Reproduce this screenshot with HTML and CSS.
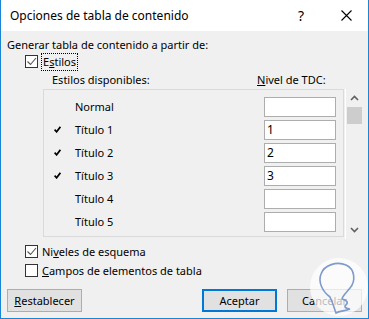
FILE: index.html
```html
<!DOCTYPE html>
<html lang="es">
<head>
  <meta charset="UTF-8">
  <meta name="viewport" content="width=device-width, initial-scale=1.0">
  <title>Opciones de tabla de contenido</title>
  <link rel="stylesheet" href="styles.css">
</head>
<body>
  <div class="window">
    <div class="titlebar">
      <span class="title">Opciones de tabla de contenido</span>
      <span class="help">?</span>
      <svg class="close" width="11" height="11" viewBox="0 0 11 11">
        <path d="M0.5 0.5 L10.5 10.5 M10.5 0.5 L0.5 10.5" stroke="#000" stroke-width="1.1" fill="none"/>
      </svg>
    </div>

    <div class="content">
      <p class="intro">Generar tabla de contenido a partir de:</p>

      <div class="check">
        <span class="box">
          <svg width="11" height="11" viewBox="0 0 11 11"><path d="M1.5 5.5 L4.5 8.5 L10 2" stroke="#555" stroke-width="1.1" fill="none"/></svg>
        </span>
        <span class="focus">E<u>s</u>tilos</span>
      </div>

      <div class="styles">
        <div class="styles-head">
          <span>Estilos disponibles:</span>
          <span class="level-head"><u>N</u>ivel de TDC:</span>
        </div>
        <div class="list-wrap">
          <div class="list">
            <div class="row"><span class="mark"></span><span>Normal</span><span class="level"></span></div>
            <div class="row"><span class="mark on"></span><span>Título 1</span><span class="level">1</span></div>
            <div class="row"><span class="mark on"></span><span>Título 2</span><span class="level">2</span></div>
            <div class="row"><span class="mark on"></span><span>Título 3</span><span class="level">3</span></div>
            <div class="row"><span class="mark"></span><span>Título 4</span><span class="level"></span></div>
            <div class="row"><span class="mark"></span><span>Título 5</span><span class="level"></span></div>
          </div>
          <div class="scrollbar">
            <svg class="arrow" width="9" height="6" viewBox="0 0 9 6"><path d="M1 5 L4.5 1.5 L8 5" stroke="#606060" stroke-width="1.6" fill="none"/></svg>
            <div class="thumb"></div>
            <div class="track"></div>
            <svg class="arrow" width="9" height="6" viewBox="0 0 9 6"><path d="M1 1 L4.5 4.5 L8 1" stroke="#606060" stroke-width="1.6" fill="none"/></svg>
          </div>
        </div>
      </div>

      <div class="check check-first">
        <span class="box">
          <svg width="11" height="11" viewBox="0 0 11 11"><path d="M1.5 5.5 L4.5 8.5 L10 2" stroke="#555" stroke-width="1.1" fill="none"/></svg>
        </span>
        <span class="label">Ni<u>v</u>eles de esquema</span>
      </div>
      <div class="check">
        <span class="box"></span>
        <span class="label"><u>C</u>ampos de elementos de tabla</span>
      </div>

      <div class="buttons">
        <button class="btn"><u>R</u>establecer</button>
        <span class="spacer"></span>
        <button class="btn btn-default">Aceptar</button>
        <button class="btn">Cancelar</button>
      </div>
    </div>

    <svg class="watermark" width="62" height="62" viewBox="0 0 62 62">
      <circle cx="30" cy="31" r="29" fill="rgba(255,255,255,0.72)"/>
      <path d="M21 41 C13 35 9 26 12 18 C15 9 28 5 37 9 C46 13 47 25 41 32 C38 36 34 39 33 43 C37 44 40 46 37 49 C34 51 38 53 41 53 C36 55 30 55 27 57 C25 52 24 47 21 41 Z" stroke="#7d9bcb" stroke-width="1.6" fill="none"/>
    </svg>
  </div>
</body>
</html>
```

FILE: styles.css
```css
body {
  margin: 0;
  font-family: "Noto Sans", "Open Sans", sans-serif;
  font-size: 11px;
  color: #000;
  background: #fff;
}
.window {
  position: relative;
  width: 369px;
  height: 319px;
  box-sizing: border-box;
  border: 1px solid #1a85d6;
  border-top: none;
  background: #f0f0f0;
  overflow: hidden;
  display: flex;
  flex-direction: column;
}
.titlebar {
  height: 31px;
  background: #fff;
  display: flex;
  align-items: center;
  padding-left: 9px;
  flex-shrink: 0;
}
.title {
  flex: 1;
  font-size: 12px;
}
.help {
  font-size: 14px;
  margin-right: 37px;
}
.close {
  margin-right: 16px;
}
.content {
  padding: 6px 6px 0 6px;
  line-height: 16px;
}
.intro {
  margin: 0;
}
.check {
  display: flex;
  align-items: center;
  height: 17px;
  margin-left: 18px;
}
.check-first {
  margin-top: 4px;
}
.check + .check {
  margin-top: 2px;
}
.box {
  width: 13px;
  height: 13px;
  box-sizing: border-box;
  border: 1px solid #333;
  background: #fff;
  display: flex;
  align-items: center;
  justify-content: center;
  margin-right: 4px;
}
.focus {
  outline: 1px dotted #000;
  padding: 0 1px;
  line-height: 16px;
}
.styles {
  margin-left: 36px;
  margin-top: 2px;
}
.styles-head {
  display: flex;
  padding-left: 9px;
  margin-bottom: 1px;
}
.styles-head span:first-child {
  flex: 1;
}
.level-head {
  width: 105px;
}
.list-wrap {
  display: flex;
  height: 150px;
}
.list {
  width: 301px;
  height: 148px;
  box-sizing: border-box;
  border: 1px solid #dadada;
  padding: 7px 7px 0 10px;
  display: flex;
  flex-direction: column;
  gap: 3px;
}
.row {
  display: grid;
  grid-template-columns: 21px 1fr 72px;
  align-items: center;
  height: 20px;
}
.mark.on {
  width: 7px;
  height: 7px;
  margin-bottom: 2px;
  background: url("data:image/svg+xml;utf8,<svg xmlns='http://www.w3.org/2000/svg' viewBox='0 0 7 7'><path d='M0.6 3.6 L2.6 5.8 L6.4 0.8' stroke='black' stroke-width='1.7' fill='none'/></svg>") no-repeat;
}
.level {
  height: 20px;
  box-sizing: border-box;
  border: 1px solid #adadad;
  background: #fff;
  padding-left: 2px;
  line-height: 18px;
  font-size: 12px;
}
.scrollbar {
  margin-left: 1px;
  width: 17px;
  box-sizing: border-box;
  border-left: 1px solid #fff;
  display: flex;
  flex-direction: column;
  align-items: center;
}
.arrow {
  margin: 6px 0;
}
.thumb {
  width: 15px;
  height: 17px;
  background: #cdcdcd;
}
.track {
  flex: 1;
}
.buttons {
  display: flex;
  gap: 10px;
  margin-top: 10px;
}
.spacer {
  flex: 1;
}
.btn {
  width: 75px;
  height: 23px;
  box-sizing: border-box;
  border: 1px solid #adadad;
  background: #e1e1e1;
  font-family: inherit;
  font-size: 11px;
  color: #000;
  padding: 0;
}
.btn-default {
  border: 2px solid #0078d7;
}
.watermark {
  position: absolute;
  left: 308px;
  top: 256px;
}
```
